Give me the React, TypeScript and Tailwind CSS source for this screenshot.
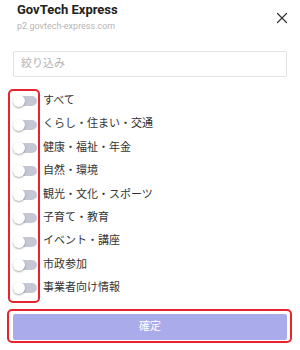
import { X } from "lucide-react"

const categories = [
  "すべて",
  "くらし・住まい・交通",
  "健康・福祉・年金",
  "自然・環境",
  "観光・文化・スポーツ",
  "子育て・教育",
  "イベント・講座",
  "市政参加",
  "事業者向け情報",
]

function Toggle() {
  return (
    <div className="relative h-[10px] w-[23px] rounded-full bg-[#c5c8d4]">
      <div className="absolute left-[-1px] top-[-1px] h-[12px] w-[12px] rounded-full bg-white shadow-[0_1px_2px_rgba(0,0,0,0.35)]" />
    </div>
  )
}

export default function App() {
  return (
    <div className="h-[350px] w-[300px] overflow-hidden bg-white font-['Roboto','Noto_Sans_CJK_JP',sans-serif]">
      {/* Header */}
      <div className="flex items-start justify-between pl-[17px] pr-[9px] pt-[1px]">
        <div>
          <h1 className="text-[13px] font-bold leading-[17px] text-[#222]">GovTech Express</h1>
          <p className="mt-[3px] text-[9px] leading-[11px] text-[#b5b5b5]">p2.govtech-express.com</p>
        </div>
        <X size={18} strokeWidth={1.6} className="mt-[8px] text-[#333]" />
      </div>

      {/* Filter input */}
      <div className="mx-[13px] mt-[18px]">
        <input
          placeholder="絞り込み"
          className="h-[26px] w-full rounded-[2px] border border-[#e2e2e2] px-[7px] text-[11px] text-[#333] outline-none placeholder:text-[#b5b5b5]"
        />
      </div>

      {/* Category toggles */}
      <div className="relative mt-[13px]">
        <div className="pointer-events-none absolute bottom-[-3px] left-[8px] top-[-1px] w-[32px] rounded-[5px] border-2 border-[#e8232d]" />
        {categories.map((c) => (
          <div key={c} className="flex h-[23.4px] items-center gap-[6px] pl-[14px]">
            <Toggle />
            <span className="text-[11px] text-[#333]">{c}</span>
          </div>
        ))}
      </div>

      {/* Confirm button */}
      <div className="relative mx-[13px] mt-[14px]">
        <div className="pointer-events-none absolute bottom-[-3px] left-[-6px] right-[-5px] top-[-5px] rounded-[5px] border-2 border-[#e8232d]" />
        <button className="flex h-[26px] w-full items-center justify-center rounded-[2px] bg-[#aaabea] text-[11px] text-white">
          確定
        </button>
      </div>
    </div>
  )
}
